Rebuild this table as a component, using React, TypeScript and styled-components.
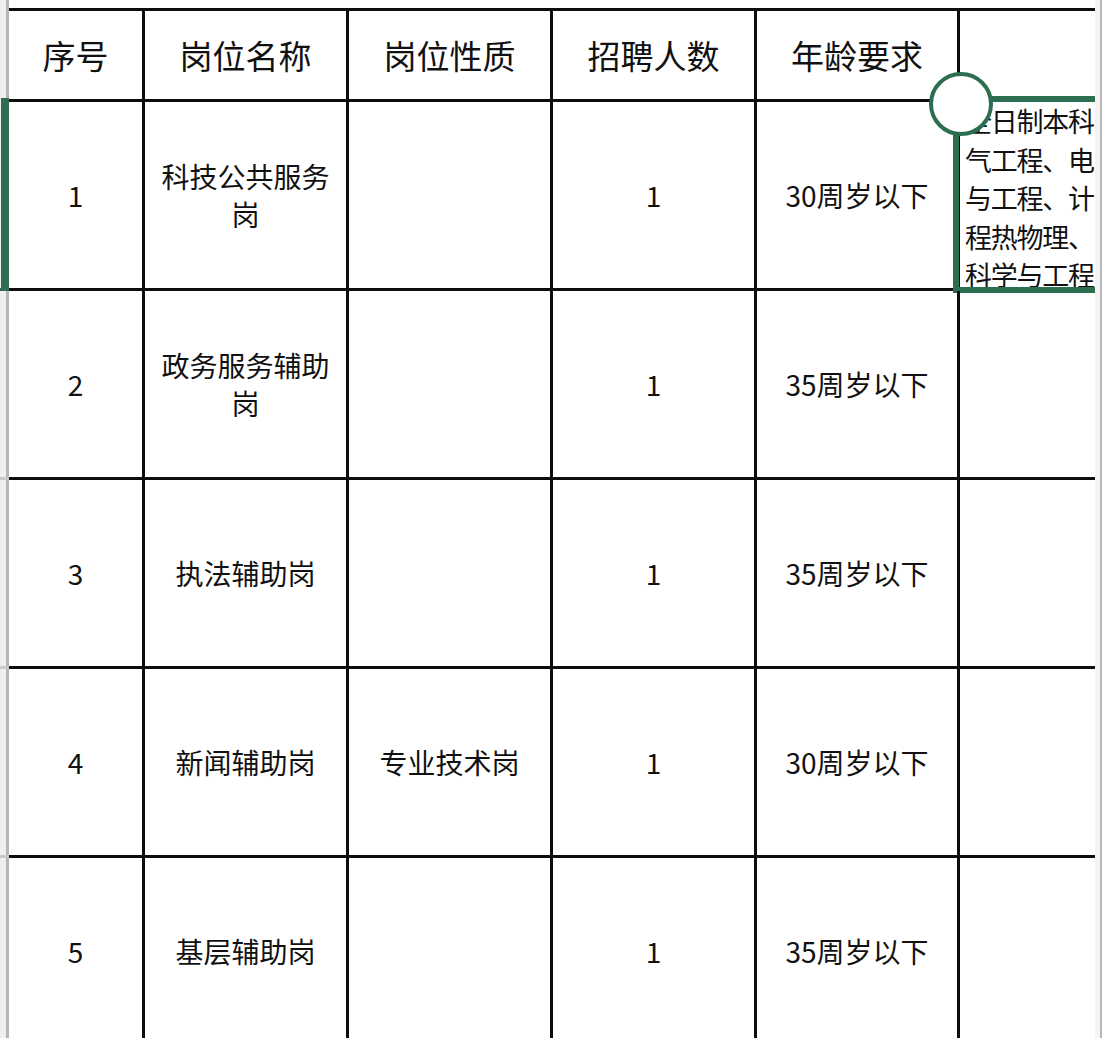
import React from "react";
import styled, { createGlobalStyle, css } from "styled-components";

const GlobalStyle = createGlobalStyle`
  html, body {
    margin: 0;
    padding: 0;
    background: #ffffff;
    overflow: hidden;
  }
  body {
    font-family: "Noto Sans CJK SC", "Noto Sans", sans-serif;
    color: #111111;
  }
`;

const GREEN = "#2c6e4f";

const Page = styled.div`
  display: flex;
  width: 1102px;
  height: 1038px;
  overflow: hidden;
  background: #ffffff;
`;

const Gutter = styled.div`
  display: flex;
  flex-direction: column;
  width: 9px;
  flex: none;
`;

const GutterCell = styled.div<{ $h: number; $selected?: boolean }>`
  box-sizing: border-box;
  height: ${(p) => p.$h}px;
  flex: none;
  border-bottom: 3px solid #c9c9c9;
  background: linear-gradient(to right, #efefef 0 6px, #b6b6b6 6px 9px);
  ${(p) =>
    p.$selected &&
    css`
      margin-top: -4px;
      height: ${p.$h + 4}px;
      border-bottom: 3px solid ${GREEN};
      background: linear-gradient(to right, #efefef 0 1px, ${GREEN} 1px 9px);
    `}
`;

const GutterRest = styled.div`
  flex: 1;
  background: linear-gradient(to right, #efefef 0 6px, #b6b6b6 6px 9px);
`;

const Sheet = styled.div`
  width: 1086px;
  flex: none;
  overflow: hidden;
  padding-top: 8px;
`;

const Grid = styled.div`
  display: grid;
  grid-template-columns: 136px 204px 204px 204px 203px 320px;
  grid-auto-rows: 189px;
  grid-template-rows: 91px;
  border-top: 3px solid #0d0d0d;
  width: max-content;
`;

const Cell = styled.div<{ $header?: boolean }>`
  box-sizing: border-box;
  position: relative;
  display: flex;
  align-items: center;
  justify-content: center;
  text-align: center;
  padding: 0 14px;
  border-right: 3px solid #0d0d0d;
  border-bottom: 3px solid #0d0d0d;
  font-size: ${(p) => (p.$header ? 33 : 28)}px;
  line-height: 38px;
  color: #111111;
  word-break: break-all;
`;

const OverflowCell = styled.div`
  box-sizing: border-box;
  position: relative;
  border-bottom: 3px solid #0d0d0d;
  padding: 0 0 0 5px;
  font-size: 27px;
  letter-spacing: -1.25px;
  line-height: 38.5px;
  color: #111111;
`;

const OverflowLine = styled.div`
  white-space: nowrap;
  overflow: hidden;
`;

const SelectionBox = styled.div`
  position: absolute;
  left: -7px;
  top: -6px;
  right: -40px;
  bottom: -5px;
  border: 6px solid ${GREEN};
  pointer-events: none;
`;

const Handle = styled.div`
  position: absolute;
  left: -31px;
  top: -30px;
  width: 64px;
  height: 64px;
  box-sizing: border-box;
  border-radius: 50%;
  border: 4px solid ${GREEN};
  background: #ffffff;
  z-index: 2;
`;

const RightEdge = styled.div`
  flex: 1;
  background: #f5f5f5;
  border-right: 2px solid #b9b9b9;
`;

const headers = ["序号", "岗位名称", "岗位性质", "招聘人数", "年龄要求"];

type Row = {
  no: string;
  name: string;
  kind: string;
  count: string;
  age: string;
};

const rows: Row[] = [
  { no: "1", name: "科技公共服务岗", kind: "", count: "1", age: "30周岁以下" },
  { no: "2", name: "政务服务辅助岗", kind: "", count: "1", age: "35周岁以下" },
  { no: "3", name: "执法辅助岗", kind: "", count: "1", age: "35周岁以下" },
  { no: "4", name: "新闻辅助岗", kind: "专业技术岗", count: "1", age: "30周岁以下" },
  { no: "5", name: "基层辅助岗", kind: "", count: "1", age: "35周岁以下" },
];

const selectedLines = ["全日制本科", "气工程、电", "与工程、计", "程热物理、", "科学与工程"];

export default function App() {
  return (
    <>
      <GlobalStyle />
      <Page>
        <Gutter>
          <GutterCell $h={102} />
          {rows.map((r, i) => (
            <GutterCell key={r.no} $h={189} $selected={i === 0} />
          ))}
          <GutterRest />
        </Gutter>
        <Sheet>
          <Grid>
            {headers.map((h) => (
              <Cell key={h} $header>
                {h}
              </Cell>
            ))}
            <OverflowCell />
            {rows.map((r, i) => (
              <React.Fragment key={r.no}>
                <Cell>{r.no}</Cell>
                <Cell>{r.name}</Cell>
                <Cell>{r.kind}</Cell>
                <Cell>{r.count}</Cell>
                <Cell>{r.age}</Cell>
                <OverflowCell>
                  {i === 0 && (
                    <>
                      {selectedLines.map((l) => (
                        <OverflowLine key={l}>{l}</OverflowLine>
                      ))}
                      <SelectionBox />
                      <Handle />
                    </>
                  )}
                </OverflowCell>
              </React.Fragment>
            ))}
          </Grid>
        </Sheet>
        <RightEdge />
      </Page>
    </>
  );
}
